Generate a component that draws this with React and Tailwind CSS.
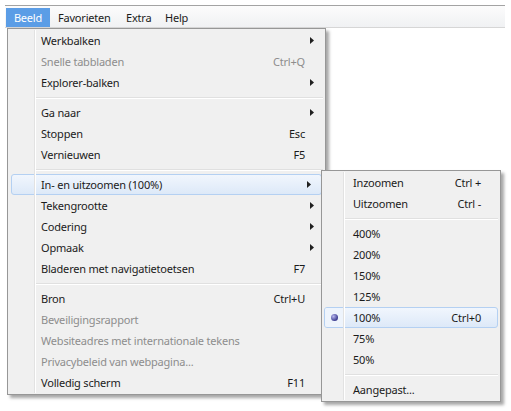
import React from "react";

const mainItems = [
  { label: "Werkbalken", arrow: true },
  { label: "Snelle tabbladen", shortcut: "Ctrl+Q", disabled: true },
  { label: "Explorer-balken", arrow: true },
  { sep: true },
  { label: "Ga naar", arrow: true },
  { label: "Stoppen", shortcut: "Esc" },
  { label: "Vernieuwen", shortcut: "F5" },
  { sep: true },
  { label: "In- en uitzoomen (100%)", arrow: true, active: true },
  { label: "Tekengrootte", arrow: true },
  { label: "Codering", arrow: true },
  { label: "Opmaak", arrow: true },
  { label: "Bladeren met navigatietoetsen", shortcut: "F7" },
  { sep: true },
  { label: "Bron", shortcut: "Ctrl+U" },
  { label: "Beveiligingsrapport", disabled: true },
  { label: "Websiteadres met internationale tekens", disabled: true },
  { label: "Privacybeleid van webpagina...", disabled: true },
  { label: "Volledig scherm", shortcut: "F11" },
];

const zoomItems = [
  { label: "Inzoomen", shortcut: "Ctrl +" },
  { label: "Uitzoomen", shortcut: "Ctrl -" },
  { sep: true },
  { label: "400%" },
  { label: "200%" },
  { label: "150%" },
  { label: "125%" },
  { label: "100%", shortcut: "Ctrl+0", checked: true },
  { label: "75%" },
  { label: "50%" },
  { sep: true },
  { label: "Aangepast..." },
];

function Arrow() {
  return (
    <svg width="4" height="7" viewBox="0 0 4 7">
      <polygon points="0,0 4,3.5 0,7" fill="#202020" />
    </svg>
  );
}

function Separator({ left }) {
  return (
    <div className="h-[9px] flex flex-col justify-center" style={{ paddingLeft: left }}>
      <div className="h-px bg-[#e0e0e0] mr-[2px]" />
      <div className="h-px bg-white mr-[2px]" />
    </div>
  );
}

function MainRow({ item }) {
  const color = item.disabled ? "text-[#8d8d8d]" : "text-[#1b1b1b]";
  if (item.active) {
    return (
      <div className="h-[21px] mx-[3px] flex items-center rounded-[3px] border border-[#b4d0f2] bg-gradient-to-b from-[#f1f6fd] to-[#dde9f8] pl-[29px]">
        <span className={"flex-1 " + color}>{item.label}</span>
        <span className="w-[16px] flex items-center pl-[2px]">
          <Arrow />
        </span>
      </div>
    );
  }
  return (
    <div className="h-[21px] flex items-center pl-[33px]">
      <span className={"flex-1 " + color}>{item.label}</span>
      {item.shortcut && <span className={color}>{item.shortcut}</span>}
      <span className="w-[20px] flex items-center pl-[5px]">{item.arrow && <Arrow />}</span>
    </div>
  );
}

function ZoomRow({ item }) {
  if (item.checked) {
    return (
      <div className="h-[21px] mx-[2px] flex items-center rounded-[3px] border border-[#b4d0f2] bg-gradient-to-b from-[#f1f6fd] to-[#dde9f8]">
        <div className="w-[19px] h-[19px] flex items-center justify-center border-r border-[#c8dcf4] bg-[#eef4fc] rounded-l-[2px]">
          <div className="w-[7px] h-[7px] rounded-full bg-[radial-gradient(circle_at_35%_35%,#b8b8f0,#3c3c90_70%)]" />
        </div>
        <span className="flex-1 pl-[9px] text-[#1b1b1b]">{item.label}</span>
        <span className="pr-[16px] text-[#1b1b1b]">{item.shortcut}</span>
      </div>
    );
  }
  return (
    <div className="h-[21px] flex items-center pl-[31px]">
      <span className="flex-1 text-[#1b1b1b]">{item.label}</span>
      {item.shortcut && <span className="pr-[19px] text-[#1b1b1b]">{item.shortcut}</span>}
    </div>
  );
}

export default function App() {
  return (
    <div
      className="relative w-[511px] h-[411px] bg-white overflow-hidden text-[11px] tracking-[-0.2px] leading-none"
      style={{ fontFamily: '"Noto Sans", "Open Sans", sans-serif' }}
    >
      {/* menubalk */}
      <div className="mt-[5px] ml-[5px] w-[500px] h-[23px] border-t border-b border-t-[#a3a3a3] border-b-[#d6d6d6] bg-gradient-to-b from-[#fcfcfc] to-[#f0f1f3] flex items-end">
        <div className="h-[19px] ml-[1px] w-[44px] flex items-center justify-center bg-[#5b9de6] text-white">Beeld</div>
        <div className="h-[19px] ml-[8px] w-[68px] flex items-center text-[#1b1b1b]">Favorieten</div>
        <div className="h-[19px] w-[39px] flex items-center text-[#1b1b1b]">Extra</div>
        <div className="h-[19px] flex items-center text-[#1b1b1b]">Help</div>
      </div>

      {/* hoofdmenu */}
      <div className="relative ml-[7px] w-[319px] border border-[#979797] bg-[#f0f0f0] py-px shadow-[3px_3px_3px_rgba(0,0,0,0.35)]">
        <div className="absolute top-[1px] bottom-[1px] left-[26px] w-px bg-[#e2e2e2]" />
        <div className="absolute top-[1px] bottom-[1px] left-[27px] w-px bg-white" />
        {mainItems.map((item, i) =>
          item.sep ? <Separator key={i} left={27} /> : <MainRow key={i} item={item} />
        )}
      </div>

      {/* submenu zoom */}
      <div className="absolute left-[321px] top-[170px] w-[180px] border border-[#979797] bg-[#f0f0f0] py-px shadow-[3px_3px_3px_rgba(0,0,0,0.35)]">
        <div className="absolute top-[1px] bottom-[1px] left-[21px] w-px bg-[#e2e2e2]" />
        <div className="absolute top-[1px] bottom-[1px] left-[22px] w-px bg-white" />
        {zoomItems.map((item, i) =>
          item.sep ? <Separator key={i} left={22} /> : <ZoomRow key={i} item={item} />
        )}
      </div>
    </div>
  );
}
